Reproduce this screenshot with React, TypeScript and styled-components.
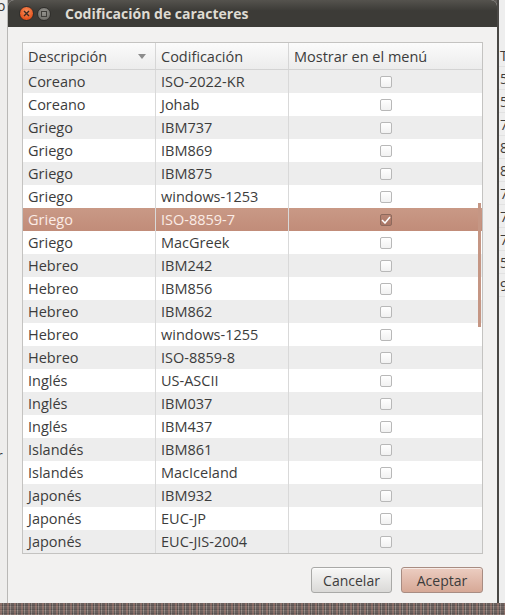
import styled, { createGlobalStyle } from "styled-components";

const GlobalStyle = createGlobalStyle`
  html, body {
    margin: 0;
    padding: 0;
    background: #5f5b57;
  }
  * {
    box-sizing: border-box;
  }
`;

type Encoding = { desc: string; code: string; shown?: boolean };

const encodings: Encoding[] = [
  { desc: "Coreano", code: "ISO-2022-KR" },
  { desc: "Coreano", code: "Johab" },
  { desc: "Griego", code: "IBM737" },
  { desc: "Griego", code: "IBM869" },
  { desc: "Griego", code: "IBM875" },
  { desc: "Griego", code: "windows-1253" },
  { desc: "Griego", code: "ISO-8859-7", shown: true },
  { desc: "Griego", code: "MacGreek" },
  { desc: "Hebreo", code: "IBM242" },
  { desc: "Hebreo", code: "IBM856" },
  { desc: "Hebreo", code: "IBM862" },
  { desc: "Hebreo", code: "windows-1255" },
  { desc: "Hebreo", code: "ISO-8859-8" },
  { desc: "Inglés", code: "US-ASCII" },
  { desc: "Inglés", code: "IBM037" },
  { desc: "Inglés", code: "IBM437" },
  { desc: "Islandés", code: "IBM861" },
  { desc: "Islandés", code: "MacIceland" },
  { desc: "Japonés", code: "IBM932" },
  { desc: "Japonés", code: "EUC-JP" },
  { desc: "Japonés", code: "EUC-JIS-2004" },
];

const SELECTED = 6;

const backChars = ["T", "5", "5", "7", "8", "8", "7", "7", "7.", "5.", "9"];

const Screen = styled.div`
  width: 505px;
  height: 615px;
  display: grid;
  grid-template-columns: 8px 489px 8px;
  grid-template-rows: 603px 12px;
  overflow: hidden;
  font-family: "Open Sans", "Noto Sans", sans-serif;
`;

const LeftStrip = styled.div`
  background: #eeedec;
  border-right: 1px solid #b9b8b6;
  position: relative;
  font-size: 14px;
  color: #3c3c3c;
  overflow: hidden;
`;

const LeftChar = styled.span<{ $top: number }>`
  position: absolute;
  top: ${(p) => p.$top}px;
  left: -3px;
`;

const RightStrip = styled.div`
  background: #eeeeee;
  border-left: 2px solid #4a4845;
  padding-top: 44px;
  display: flex;
  flex-direction: column;
  font-size: 14px;
  color: #3c3c3c;
  overflow: hidden;
`;

const RightLine = styled.div`
  height: 23px;
  line-height: 23px;
  padding-left: 1px;
  border-bottom: 1px solid #e2e2e2;
  white-space: nowrap;
`;

const Desktop = styled.div`
  grid-column: 1 / 4;
  background:
    repeating-linear-gradient(90deg, rgba(170, 120, 110, 0.45) 0 2px, rgba(60, 60, 60, 0.35) 2px 3px, rgba(210, 200, 195, 0.3) 3px 4px, rgba(90, 80, 80, 0.4) 4px 7px),
    repeating-linear-gradient(0deg, #8a7d77 0 1px, #5d5755 1px 2px, #746a66 2px 4px);
`;

const Dialog = styled.div`
  display: flex;
  flex-direction: column;
  border-radius: 6px 6px 0 0;
  overflow: hidden;
  background: #f2f1f0;
`;

const TitleBar = styled.div`
  height: 27px;
  flex: none;
  display: flex;
  align-items: center;
  padding-left: 11px;
  gap: 3px;
  background: linear-gradient(#55534e, #3c3b37 40%, #3c3b37);
`;

const CloseButton = styled.div`
  width: 15px;
  height: 15px;
  border-radius: 50%;
  background: radial-gradient(circle at 50% 35%, #f7925f, #e5531d 70%, #c23d10);
  border: 1px solid #2f2e2b;
  display: flex;
  align-items: center;
  justify-content: center;
`;

const MaxButton = styled.div`
  width: 14px;
  height: 14px;
  border-radius: 50%;
  background: radial-gradient(circle at 50% 35%, #94938e, #72716c 75%);
  border: 1px solid #2f2e2b;
  display: flex;
  align-items: center;
  justify-content: center;
`;

const MaxSquare = styled.div`
  width: 6px;
  height: 6px;
  border: 1px solid #3f3e3a;
`;

const Title = styled.div`
  margin-left: 11px;
  font-weight: 700;
  font-size: 14px;
  color: #dfdbd2;
`;

const Body = styled.div`
  flex: 1;
  display: flex;
  flex-direction: column;
  padding: 15px 14px 10px 14px;
`;

const Table = styled.div`
  position: relative;
  border: 1px solid #c4c3c1;
  background: #ffffff;
  font-size: 14.5px;
  color: #3c3c3c;
`;

const columns = "132px 133px 1fr";

const Header = styled.div`
  display: grid;
  grid-template-columns: ${columns};
  height: 27px;
  background: linear-gradient(#fbfbfb, #ececec);
  border-bottom: 1px solid #d3d3d3;
`;

const HeadCell = styled.div<{ $first?: boolean }>`
  display: flex;
  align-items: center;
  justify-content: space-between;
  padding: 0 9px 0 5px;
  border-left: ${(p) => (p.$first ? "none" : "1px solid #d6d6d6")};
  white-space: nowrap;
`;

const Row = styled.div<{ $shade: boolean; $selected: boolean }>`
  display: grid;
  grid-template-columns: ${columns};
  height: 23px;
  background: ${(p) =>
    p.$selected
      ? "linear-gradient(#c99986, #c18c79)"
      : p.$shade
        ? "#ededed"
        : "#ffffff"};
  color: ${(p) => (p.$selected ? "#fbece6" : "#3c3c3c")};
`;

const Cell = styled.div<{ $first?: boolean; $center?: boolean }>`
  display: flex;
  align-items: center;
  justify-content: ${(p) => (p.$center ? "center" : "flex-start")};
  padding-left: ${(p) => (p.$center ? "0" : "5px")};
  border-left: ${(p) => (p.$first ? "none" : "1px solid #d9d9d9")};
  white-space: nowrap;
  overflow: hidden;
`;

const Check = styled.div<{ $checked: boolean }>`
  width: 12px;
  height: 12px;
  border-radius: 2px;
  border: 1px solid ${(p) => (p.$checked ? "#8e6a5d" : "#b8b8b8")};
  background: ${(p) =>
    p.$checked ? "linear-gradient(#b98574, #a97565)" : "linear-gradient(#ffffff, #f1f1f1)"};
  display: flex;
  align-items: center;
  justify-content: center;
`;

const ScrollThumb = styled.div`
  position: absolute;
  right: 1px;
  top: 160px;
  width: 3px;
  height: 124px;
  background: #c59684;
`;

const Actions = styled.div`
  margin-top: 13px;
  display: flex;
  justify-content: flex-end;
  gap: 9px;
`;

const Button = styled.button<{ $primary?: boolean }>`
  height: 26px;
  width: ${(p) => (p.$primary ? "82px" : "81px")};
  border-radius: 3px;
  font-family: inherit;
  font-size: 14px;
  color: #3c3c3c;
  border: 1px solid ${(p) => (p.$primary ? "#a88c82" : "#a9a9a7")};
  background: ${(p) =>
    p.$primary
      ? "linear-gradient(#eccdc1, #d6a896)"
      : "linear-gradient(#f8f8f7, #dad9d7)"};
  box-shadow: inset 0 1px 0 rgba(255, 255, 255, 0.6);
  padding: 0;
`;

export default function App() {
  return (
    <>
      <GlobalStyle />
      <Screen>
        <LeftStrip>
          <LeftChar $top={-4}>o</LeftChar>
          <LeftChar $top={446}>r</LeftChar>
        </LeftStrip>
        <Dialog>
          <TitleBar>
            <CloseButton>
              <svg width="7" height="7" viewBox="0 0 7 7">
                <path d="M1 1 L6 6 M6 1 L1 6" stroke="#3a2a22" strokeWidth="1.4" />
              </svg>
            </CloseButton>
            <MaxButton>
              <MaxSquare />
            </MaxButton>
            <Title>Codificación de caracteres</Title>
          </TitleBar>
          <Body>
            <Table>
              <Header>
                <HeadCell $first>
                  Descripción
                  <svg width="8" height="5" viewBox="0 0 8 5">
                    <path d="M0 0 L8 0 L4 5 Z" fill="#8c8c8c" />
                  </svg>
                </HeadCell>
                <HeadCell>Codificación</HeadCell>
                <HeadCell>Mostrar en el menú</HeadCell>
              </Header>
              {encodings.map((e, i) => (
                <Row key={e.code} $shade={i % 2 === 0} $selected={i === SELECTED}>
                  <Cell $first>{e.desc}</Cell>
                  <Cell>{e.code}</Cell>
                  <Cell $center>
                    <Check $checked={!!e.shown}>
                      {e.shown && (
                        <svg width="10" height="8" viewBox="0 0 10 8">
                          <path d="M1 4 L4 7 L9 1" stroke="#ffffff" strokeWidth="1.5" fill="none" />
                        </svg>
                      )}
                    </Check>
                  </Cell>
                </Row>
              ))}
              <ScrollThumb />
            </Table>
            <Actions>
              <Button>Cancelar</Button>
              <Button $primary>Aceptar</Button>
            </Actions>
          </Body>
        </Dialog>
        <RightStrip>
          {backChars.map((c, i) => (
            <RightLine key={i}>{c}</RightLine>
          ))}
        </RightStrip>
        <Desktop />
      </Screen>
    </>
  );
}
